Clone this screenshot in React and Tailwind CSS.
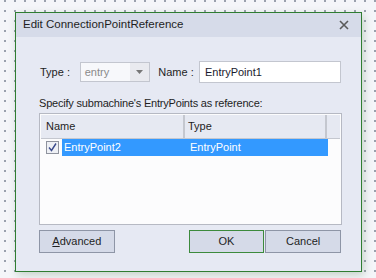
export default function App() {
    const font = { fontFamily: '"Liberation Sans", Arial, sans-serif' };
    return (
        <div className="w-[376px] h-[278px] overflow-hidden bg-[#f4f5f9] bg-[radial-gradient(circle,#9aa0ad_0.9px,transparent_1.2px)] bg-[size:10px_10px] bg-[position:0px_-4px] pt-[12px] pl-[15px]" style={font}>
            <div className="w-[347px] h-[260px] border border-[#2f7d32] bg-[#e6e9f3] shadow-[2px_3px_8px_rgba(60,110,60,0.25)] flex flex-col">
                <div className="h-[24px] bg-[#d6dbe9] flex items-center justify-between pl-[7px] pr-[12px]">
                    <span className="text-[11.5px] text-[#1e1e1e]">Edit ConnectionPointReference</span>
                    <svg width="10" height="10" viewBox="0 0 10 10">
                        <path d="M1 1 L9 9 M9 1 L1 9" stroke="#5a5a5a" strokeWidth="1.6" />
                    </svg>
                </div>
                <div className="flex-1 flex flex-col pl-[23px] pr-[20px] pt-[24px] text-[11px]">
                    <div className="flex items-center h-[22px] text-[#1e1e1e]">
                        <span className="ml-[1px] w-[40px]">Type :</span>
                        <div className="w-[71px] h-[20px] border border-[#c3c6cf] bg-[#f7f8fb] flex items-center">
                            <span className="flex-1 pl-[4px] text-[#8a8a8a]">entry</span>
                            <div className="w-[19px] h-full bg-[#e9eaef] flex items-center justify-center">
                                <svg width="7" height="4" viewBox="0 0 7 4"><path d="M0 0 H7 L3.5 4 Z" fill="#777" /></svg>
                            </div>
                        </div>
                        <span className="ml-[8px] w-[41px]">Name :</span>
                        <div className="w-[143px] h-[22px] border border-[#c3c6cf] bg-white flex items-center pl-[5px] text-[#1a1a2e]">EntryPoint1</div>
                    </div>
                    <div className="mt-[12px] text-[#1e1e1e] h-[16px] leading-[16px] tracking-[-0.2px]">Specify submachine's EntryPoints as reference:</div>
                    <div className="mt-[2px] w-[303px] h-[112px] border border-[#b6b9c3] bg-[#fcfcfd] p-[1px]">
                        <div className="flex h-[24px] bg-[#e6e9f2] border-b border-[#c4c7cf] text-[#1e1e1e]">
                            <div className="w-[144px] border-r-2 border-[#c4c7cf] flex items-center pl-[5px]">Name</div>
                            <div className="w-[142px] border-r-2 border-[#c4c7cf] flex items-center pl-[3px]">Type</div>
                        </div>
                        <div className="flex h-[17px] items-center">
                            <div className="w-[21px] flex items-center pl-[5px]">
                                <svg width="13" height="13" viewBox="0 0 13 13">
                                    <rect x="0.5" y="0.5" width="12" height="12" fill="#eef0f5" stroke="#8f939e" />
                                    <path d="M3 6.5 L5.5 9.5 L10 2.5" fill="none" stroke="#3a4a8c" strokeWidth="1.4" />
                                </svg>
                            </div>
                            <div className="w-[266px] h-full bg-[#3399ff] text-white flex">
                                <span className="w-[127px] pl-[2px] leading-[17px]">EntryPoint2</span>
                                <span className="pl-[1px] leading-[17px]">EntryPoint</span>
                            </div>
                        </div>
                    </div>
                    <div className="mt-[5px] flex text-[#1e1e1e]">
                        <button className="w-[76px] h-[23px] bg-[#d5dae8] border border-[#8e95a6]"><span className="underline">A</span>dvanced</button>
                        <button className="ml-[74px] w-[76px] h-[23px] bg-[#d5dae8] border border-[#3c8a3c]">OK</button>
                        <button className="ml-[1px] w-[76px] h-[23px] bg-[#d5dae8] border border-[#8e95a6]">Cancel</button>
                    </div>
                </div>
            </div>
        </div>
    );
}
